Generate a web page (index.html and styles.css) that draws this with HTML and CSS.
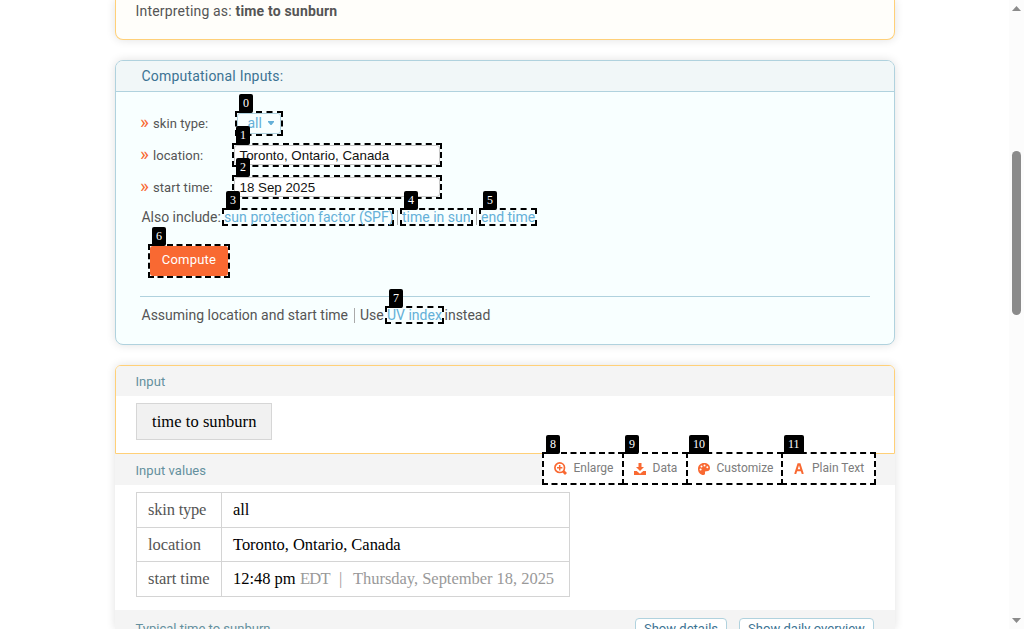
FILE: index.html
```html
<!DOCTYPE html>
<html lang="en">
<head>
<meta charset="utf-8">
<title>time to sunburn</title>
<link rel="stylesheet" href="styles.css">
</head>
<body>
<main class="column">
  <section class="card assume"><span>Interpreting as: <b>time to sunburn</b></span></section>

  <section class="card inputs">
    <h2 class="inputs-title">Computational Inputs:</h2>
    <div class="inputs-body">
      <div class="field"><i class="chev">»</i><label>skin type:</label>
        <div class="mark m0"><em class="tag">0</em><div class="select"><span>all</span><svg width="6" height="4" viewBox="0 0 6 4"><path d="M0 0h6v1L3.500 4h-1L0 1z" fill="#64b0d8"/></svg></div></div></div>
      <div class="field"><i class="chev">»</i><label>location:</label>
        <div class="mark m1"><em class="tag">1</em><div class="textbox">Toronto, Ontario, Canada</div></div></div>
      <div class="field"><i class="chev">»</i><label>start time:</label>
        <div class="mark m1"><em class="tag">2</em><div class="textbox">18 Sep 2025</div></div></div>
      <div class="also"><span class="also-label">Also include:</span>
        <a class="mark m3"><em class="tag">3</em><span>sun protection factor (SPF)</span></a><i class="bar"></i>
        <a class="mark m4"><em class="tag">4</em><span>time in sun</span></a><i class="bar"></i>
        <a class="mark m5"><em class="tag">5</em><span>end time</span></a></div>
      <div class="mark m6"><em class="tag">6</em><div class="compute">Compute</div></div>
      <div class="assuming"><span class="assuming-label">Assuming location and start time</span><i class="bar"></i><span class="use">Use</span><a class="mark m7"><em class="tag">7</em><span>UV index</span></a><span class="instead">instead</span></div>
    </div>
  </section>

  <section class="results">
    <div class="pod first">
      <h2 class="pod-title">Input</h2>
      <div class="pod-body"><div class="query">time to sunburn</div></div>
    </div>
    <div class="pod">
      <div class="pod-head">
        <h2 class="pod-title">Input values</h2>
        <div class="tools">
          <div class="mark tool w8"><em class="tag">8</em><svg width="13" height="13" viewBox="0 0 13 13" fill="none" stroke="#f96932"><circle cx="5.700" cy="5.700" r="4.800" stroke-width="1.700"/><path d="M5.700 3v5.400M3 5.700h5.400" stroke-width="1.500"/><path d="M9 9l3 3" stroke-width="2.800"/></svg><span>Enlarge</span></div>
          <div class="mark tool w9"><em class="tag">9</em><svg width="12" height="12" viewBox="0 0 12 12" fill="#f96932"><path d="M4.500 0h3v4H10L6 8 2 4h2.500zM0 8h2.700L6 10.700 9.300 8H12v4H0z"/></svg><span>Data</span></div>
          <div class="mark tool w10"><em class="tag">10</em><svg width="12" height="12" viewBox="0 0 12 12"><path d="M6 0c3.500 0 6 2 6 5 0 2.200-1.500 3.200-3.200 3.200-1.500 0-2 .4-1.800 1.600.2 1.500-.4 2.200-1.500 2.200C2.500 12 0 9.500 0 6s2.500-6 6-6z" fill="#f96932"/><g fill="#fff"><circle cx="2.600" cy="6.500" r="1"/><circle cx="3.500" cy="3.600" r="1"/><circle cx="6.500" cy="2.500" r="1"/><circle cx="9.300" cy="4.300" r="1"/></g></svg><span>Customize</span></div>
          <div class="mark tool w11"><em class="tag">11</em><svg width="10" height="11" viewBox="0 0 10 11"><path d="M1.200 11L4.300 1.200h1.400L8.800 11M2.800 7.300h4.400" fill="none" stroke="#f96932" stroke-width="2"/></svg><span>Plain Text</span></div>
        </div>
      </div>
      <div class="pod-body values">
        <dl class="table">
          <dt class="k1">skin type</dt><dd>all</dd>
          <dt>location</dt><dd>Toronto, Ontario, Canada</dd>
          <dt>start time</dt><dd><span class="clock">12:48 pm</span><span class="dim zone">EDT</span><span class="dim pipe">|</span><span class="dim day">Thursday, September 18, 2025</span></dd>
        </dl>
      </div>
    </div>
    <div class="pod last">
      <h2 class="pod-title typical">Typical time to sunburn</h2>
      <div class="pills"><span class="pill p1">Show details</span><span class="pill p2">Show daily overview</span></div>
    </div>
  </section>
</main>
<aside class="scroll">
  <svg width="9" height="5" viewBox="0 0 9 5"><path d="M4.500 0L9 5H0z" fill="#8b8b8b"/></svg>
  <div class="thumb"></div>
  <svg class="down" width="9" height="5" viewBox="0 0 9 5"><path d="M4.500 5L9 0H0z" fill="#8b8b8b"/></svg>
</aside>
</body>
</html>
```
FILE: styles.css
```css
* { box-sizing: border-box; }
html, body { margin: 0; height: 629px; overflow: hidden; background: #fff; }
body { display: flex; font-family: Roboto, sans-serif; font-size: 14px; color: #555; white-space: nowrap; }
h2, dl, dd, dt { margin: 0; font-weight: 400; }
i, em { font-style: normal; }
.column { width: 780px; margin-left: 115px; flex: none; height: 629px; }
.card { border: 1px solid #b0d2de; border-radius: 8px; box-shadow: 0 0 10px rgba(0,0,0,.12); }
.assume { height: 40px; border-color: #ffd078; border-top: 0; border-radius: 0 0 8px 8px; background: #fffefa; padding: 3px 0 0 19.5px; line-height: 16px; letter-spacing: .18px; }
.inputs { height: 285px; margin-top: 20px; background: #f8ffff; overflow: hidden; }
.inputs-title { height: 31px; border-bottom: 1px solid #b0d2de; background: #f1f7f8; color: #3c7393; font-size: 14px; line-height: 30px; padding-left: 25.5px; letter-spacing: .2px; }
.inputs-body { padding: 15px 24px 0; }
.field { display: flex; align-items: center; height: 32px; font-size: 13px; }
.chev { width: 13px; color: #f96932; font-size: 19px; line-height: 19px; margin-top: -4px; }
.field label { width: 79px; letter-spacing: .06px; }
.mark { position: relative; border: 2px dashed #000; flex: none; display: flex; align-items: center; }
.tag { position: absolute; left: 2px; top: -19px; height: 19px; min-width: 14px; padding: 0 4px; background: #000; color: #fff; border-radius: 2px; font: 12px/18px "Liberation Serif", serif; z-index: 2; text-align: center; letter-spacing: 0; }
.m0 { width: 48px; height: 25px; margin-left: 3px; }
.m1 { width: 210px; height: 24px; }
.select { width: 44px; height: 21px; border: 1px solid #b0d2de; border-radius: 3px; color: #64b0d8; font-size: 14px; line-height: 19px; display: flex; align-items: center; gap: 6.5px; padding-left: 9.5px; }
.textbox { width: 206px; height: 20px; border: 1px solid #c8c8c8; border-radius: 3px; background: #fff; color: #111; font: 13.33px/20px "Liberation Sans", sans-serif; padding-left: 4.5px; }
.also { display: flex; align-items: center; height: 18px; margin: 5px 0 0 1px; }
.also-label { width: 81px; padding-left: .5px; letter-spacing: -.02px; }
.also a, .assuming a { color: #64b0d8; height: 18px; line-height: 14px; }
.m3 { width: 172px; letter-spacing: .06px; margin-right: 1px; }
.m4 { width: 73px; margin-right: 1px; }
.m5 { width: 58px; }
.bar { width: 1px; height: 15px; background: #aaa; margin: 0 2px; flex: none; }
.m6 { width: 82px; height: 34px; margin: 18px 0 0 8px; }
.compute { width: 78px; height: 30px; background: #f96932; color: #fff; border-radius: 3px; text-align: center; font-size: 13px; line-height: 28px; letter-spacing: .2px; }
.assuming { display: flex; align-items: center; height: 37px; margin-top: 18px; border-top: 1px solid #b0d2de; padding-left: 1.5px; }
.assuming-label { width: 212px; }
.assuming .bar { margin: 0 5.5px 0 0; }
.use { width: 25px; }
.m7 { width: 59px; }
.instead { margin-left: .5px; }
.results { height: 264px; margin-top: 20px; border-radius: 6px 6px 0 0; box-shadow: 0 0 10px rgba(0,0,0,.12); background: #fff; }
.first { height: 89px; border: 1px solid #ffd078; border-radius: 6px 6px 0 0; overflow: hidden; }
.pod-title { height: 30px; background: #f4f4f4; color: #64909e; font-size: 13px; line-height: 31px; padding-left: 19.5px; letter-spacing: .06px; }
.pod-body { padding: 7px 0 0 20px; }
.query { width: 136px; height: 37px; border: 1px solid #d6d6d6; background: #f1f1f1; color: #000; font: 16.5px/36px "Liberation Serif", serif; padding-left: 15px; letter-spacing: .06px; }
.pod-head { display: flex; justify-content: space-between; height: 31px; background: #f4f4f4; }
.pod-head .pod-title { padding-left: 20.5px; line-height: 33px; }
.tools { display: flex; padding-right: 19px; margin-top: -2px; height: 33px; }
.tool { background: #fff; font-size: 12px; color: #7c7c7c; padding-left: 10px; height: 33px; }
.tool + .tool { margin-left: -2px; }
.tool + .tool .tag { left: 1px; }
.tool svg { flex: none; }
.tool span { margin: -2px 0 0 6.5px; }
.w8 { width: 82px; }
.w9 { width: 66px; }
.w10 { width: 97px; }
.w11 { width: 95px; }
.tool.w11 { padding-left: 11px; }
.tool.w11 span { margin-left: 8px; }
.pod-body.values { height: 125px; padding-left: 21px; }
.table { display: grid; grid-template-columns: 85px 348px; grid-template-rows: 35px 34px 35px; width: 434px; height: 105px; border-top: 1px solid #d4d4d4; border-left: 1px solid #d4d4d4; font: 16.5px/34px "Liberation Serif", serif; letter-spacing: -.03px; color: #555; }
.table dt, .table dd { border-right: 1px solid #d4d4d4; border-bottom: 1px solid #d4d4d4; padding-left: 11px; display: flex; }
.table dd { color: #000; }
.table .k1 { letter-spacing: -.2px; }
.clock { width: 67px; }
.table .dim { color: #999; }
.table .zone { width: 39px; letter-spacing: -.8px; }
.pipe { width: 14px; }
.last { display: flex; justify-content: space-between; height: 19px; background: #f4f4f4; overflow: hidden; }
.pod-title.typical { line-height: 37px; padding-left: 20.5px; letter-spacing: 0; }
.pills { display: flex; gap: 12px; padding: 8px 21px 0 0; }
.pill { height: 23px; border: 1px solid #b0d2de; border-radius: 4px; background: #fff; color: #3c7393; font-size: 13px; line-height: 20px; text-align: center; letter-spacing: .02px; }
.p1 { width: 92px; }
.p2 { width: 135px; }
.scroll { width: 15px; margin-left: auto; height: 629px; background: #fcfcfc; display: flex; flex-direction: column; align-items: center; padding: 6px 0; }
.thumb { width: 9px; height: 164px; border-radius: 5px; background: #8b8b8b; margin-top: 140px; }
.down { margin-top: auto; }
```
